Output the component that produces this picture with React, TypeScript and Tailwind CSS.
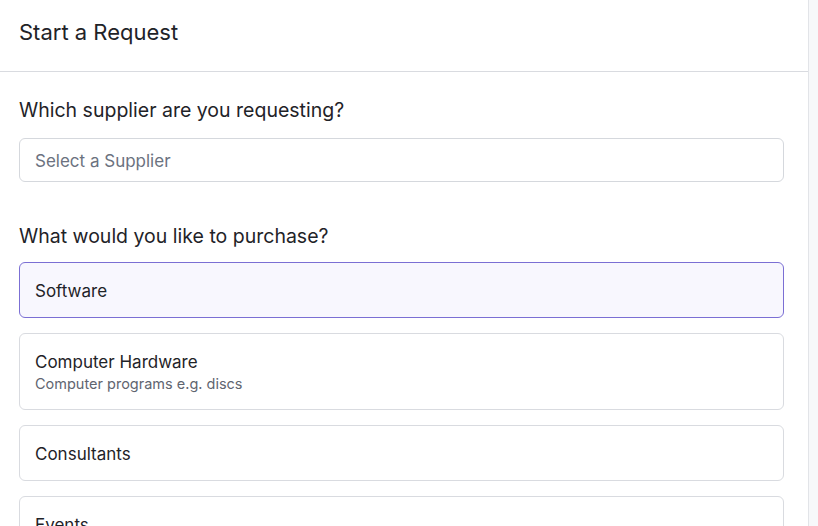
import React from "react";

const font = { fontFamily: "Inter, 'Noto Sans', sans-serif" };

export default function App() {
  return (
    <div className="flex h-[526px] w-[818px] overflow-hidden bg-[#f7f8fa]" style={font}>
      <div className="flex h-full w-[809px] shrink-0 flex-col border-r border-[#e2e4e8] bg-white">
        <div className="flex h-[72px] shrink-0 items-center border-b border-[#d9dbe0] px-[19px]">
          <h1 className="-mt-[7px] text-[22px] leading-[28px] text-[#1f2328]">Start a Request</h1>
        </div>
        <div className="flex flex-col px-[19px] pr-[24px] pt-[25px]">
          <h2 className="text-[19.5px] leading-[26px] text-[#1f2328]">Which supplier are you requesting?</h2>
          <div className="mt-[15px] flex h-[44px] items-center rounded-md border border-[#d5d8dd] px-[15px] pt-[3px] text-[17px] text-[#6b7280]">
            Select a Supplier
          </div>
          <h2 className="mt-[41px] text-[19.5px] leading-[26px] text-[#1f2328]">What would you like to purchase?</h2>
          <div className="mt-[13px] flex flex-col gap-[15px]">
            <div className="flex h-[56px] items-center rounded-md border border-[#7b6fd4] bg-[#f8f7fe] px-[15px] pt-[3px] text-[17px] text-[#1f2328]">
              Software
            </div>
            <div className="flex h-[77px] flex-col justify-center rounded-md border border-[#d9dbe0] px-[15px] pt-[1px]">
              <div className="text-[17px] leading-[24px] text-[#1f2328]">Computer Hardware</div>
              <div className="text-[14.5px] leading-[20px] text-[#5f6570]">Computer programs e.g. discs</div>
            </div>
            <div className="flex h-[56px] items-center rounded-md border border-[#d9dbe0] px-[15px] pt-[3px] text-[17px] text-[#1f2328]">
              Consultants
            </div>
            <div className="flex h-[56px] items-center rounded-md border border-[#d9dbe0] px-[15px] pt-[3px] text-[17px] text-[#1f2328]">
              Events
            </div>
          </div>
        </div>
      </div>
    </div>
  );
}
